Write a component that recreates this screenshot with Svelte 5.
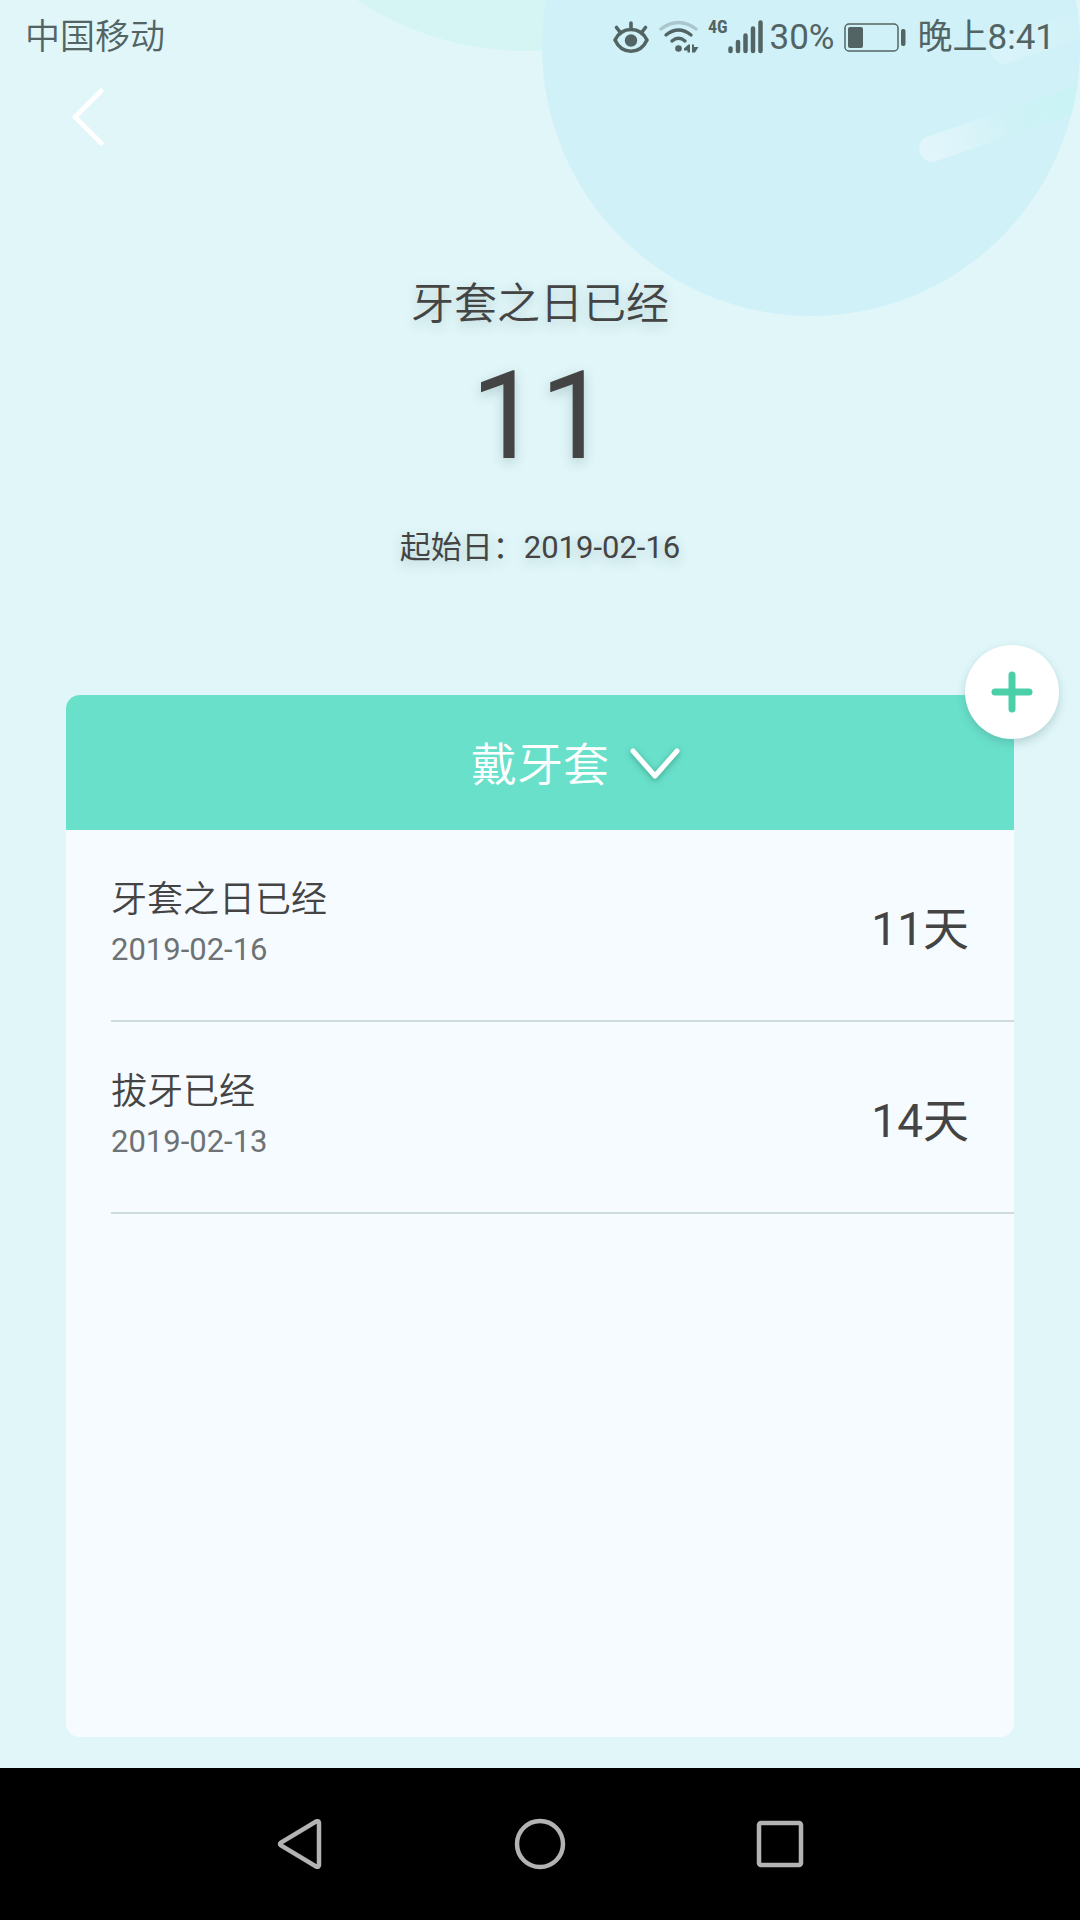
<script lang="ts">
	let category = '戴牙套';
	let open = false;

	const records = [
		{ name: '牙套之日已经', date: '2019-02-16', days: 11 },
		{ name: '拔牙已经', date: '2019-02-13', days: 14 }
	];

	const current = records[0];
</script>

<div class="screen">
	<svg class="backdrop" width="540" height="330" viewBox="0 0 540 330" aria-hidden="true">
		<defs>
			<clipPath id="disc"><circle cx="271" cy="47" r="269" /></clipPath>
			<linearGradient id="streak" x1="0" x2="1" y1="0" y2="0">
				<stop offset="0" stop-color="#e2f6fb" />
				<stop offset="0.2" stop-color="#dcf4fa" />
				<stop offset="0.45" stop-color="#cff2f6" />
				<stop offset="0.75" stop-color="#c9f3f4" />
				<stop offset="1" stop-color="#c9f3f4" />
			</linearGradient>
		</defs>
		<circle cx="-13" cy="-258" r="309" fill="#d5f4f4" />
		<circle cx="271" cy="47" r="269" fill="#cff1f8" opacity="0.9" />
		<g clip-path="url(#disc)">
			<rect x="0" y="-13" width="210" height="26" rx="13" fill="url(#streak)" transform="translate(380 153) rotate(-19)" />
			<rect x="0" y="-13" width="210" height="26" rx="13" fill="url(#streak)" opacity="0.5" transform="translate(452 55) rotate(-19)" />
		</g>
	</svg>

	<header class="status">
		<span class="carrier">中国移动</span>
		<svg class="eye" width="36" height="34" viewBox="0 0 36 34" fill="none" stroke="currentColor" stroke-width="3.6" stroke-linecap="round">
			<path d="M2 20C9 6 27 6 34 20C27 35 9 35 2 20Z" stroke-linejoin="round" />
			<path d="M18 9V3M7 12L3.500 7.500M29 12L32.500 7.500" />
			<circle cx="18" cy="20.500" r="6.200" fill="currentColor" stroke="none" />
		</svg>
		<svg class="wifi" width="40" height="34" viewBox="0 0 40 34" fill="none" stroke="currentColor" stroke-width="3.400" stroke-linecap="round">
			<path d="M2 9Q19.500 -4 37 9" opacity="0.3" />
			<path d="M7 15Q19.500 5 32 15" />
			<path d="M13 21Q19.500 15.500 26 21" />
			<circle cx="19.500" cy="28.500" r="3.300" fill="currentColor" stroke="none" />
			<path d="M31 24.500V32.500H28.500V30.500H25V28.500L29.500 24.500ZM33 24.500H35V27H39.500L36 32.500H33Z" fill="currentColor" stroke="none" />
		</svg>
		<span class="network">4G</span>
		<svg class="signal" width="36" height="34" viewBox="0 0 36 34" stroke="currentColor" stroke-width="4.500" stroke-linecap="round">
			<path d="M2.500 28.500V31M10 22V31M17.500 15.500V31M25 8.500V31M32.500 2.500V31" />
		</svg>
		<span class="percent">30%</span>
		<svg class="battery" width="62" height="30" viewBox="0 0 62 30">
			<rect x="1" y="1" width="53" height="27" rx="4" fill="none" stroke="currentColor" stroke-width="1.500" />
			<rect x="4" y="4" width="15" height="21" rx="2" fill="currentColor" />
			<rect x="57" y="6" width="4.500" height="17" rx="2" fill="currentColor" />
		</svg>
		<time>晚上8:41</time>
	</header>

	<nav class="toolbar">
		<button class="back" type="button" aria-label="返回">
			<svg width="34" height="60" viewBox="0 0 34 60" fill="none" stroke="#fff" stroke-width="5" stroke-linecap="round" stroke-linejoin="round">
				<path d="M30 3L4 29L30 55" />
			</svg>
		</button>
	</nav>

	<section class="summary">
		<h1>{current.name}</h1>
		<p class="count">{current.days}</p>
		<p class="start">起始日：{current.date}</p>
	</section>

	<main class="card">
		<button class="category" type="button" aria-expanded={open} on:click={() => (open = !open)}>
			<span class="label">{category}</span>
			<svg class="chevron" width="52" height="36" viewBox="0 0 52 36" fill="none" stroke="#fff" stroke-width="5" stroke-linecap="round" stroke-linejoin="round">
				<path d="M4 4L26 29L48 4" />
			</svg>
		</button>
		<button class="add" type="button" aria-label="添加">
			<svg width="42" height="42" viewBox="0 0 42 42" stroke="#4acfa8" stroke-width="7" stroke-linecap="round">
				<path d="M21 4V38M4 21H38" />
			</svg>
		</button>
		<ul>
			{#each records as record}
				<li>
					<div>
						<h2>{record.name}</h2>
						<time>{record.date}</time>
					</div>
					<span class="days">{record.days}天</span>
				</li>
			{/each}
		</ul>
	</main>

	<footer>
		<button type="button" aria-label="后退">
			<svg width="52" height="52" viewBox="0 0 52 52">
				<path d="M42 3.500Q45 2.500 45 5V47Q45 49.500 42 48.500L7 27.500Q5 26 7 24.500Z" />
			</svg>
		</button>
		<button type="button" aria-label="主屏幕">
			<svg width="52" height="52" viewBox="0 0 52 52"><circle cx="26" cy="26" r="23" /></svg>
		</button>
		<button type="button" aria-label="最近任务">
			<svg width="52" height="52" viewBox="0 0 52 52"><rect x="5" y="5" width="42" height="42" rx="2" /></svg>
		</button>
	</footer>
</div>

<style>
	:global(body) {
		margin: 0;
		background: #e0f6f9;
	}
	.screen {
		position: relative;
		display: flex;
		flex-direction: column;
		min-height: 100vh;
		overflow: hidden;
		background: #e0f6f9;
		color: #444;
		font-family: Roboto, 'Noto Sans CJK SC', sans-serif;
	}
	.backdrop {
		position: absolute;
		top: 0;
		right: 0;
		overflow: visible;
	}
	h1,
	h2,
	p,
	ul {
		margin: 0;
		padding: 0;
		font-weight: 400;
	}
	button {
		display: flex;
		align-items: center;
		justify-content: center;
		margin: 0;
		padding: 0;
		border: 0;
		background: none;
		color: inherit;
		font: inherit;
		cursor: pointer;
	}
	.status {
		position: relative;
		display: flex;
		align-items: center;
		height: 76px;
		padding: 0 25px;
		color: #526463;
		font-size: 35px;
		line-height: 78px;
	}
	.carrier {
		margin-right: auto;
		font-weight: 350;
	}
	.eye,
	.wifi,
	.signal {
		margin-bottom: 2px;
	}
	.wifi {
		margin-left: 10px;
	}
	.network {
		align-self: flex-start;
		margin: 15px 0 0 9px;
		font-family: 'Roboto Condensed', Roboto, sans-serif;
		font-size: 18px;
		font-weight: 700;
		line-height: 24px;
	}
	.percent {
		margin-left: 6px;
	}
	.battery {
		margin: 0 12px 0 9px;
	}
	.toolbar {
		position: relative;
		display: flex;
		padding: 12px 71px;
	}
	.summary {
		position: relative;
		display: flex;
		flex-direction: column;
		align-items: center;
		padding: 116px 0 127px;
		text-shadow: 0 4px 12px rgba(60, 90, 90, 0.25);
	}
	h1 {
		font-size: 43px;
		font-weight: 350;
		line-height: 56px;
	}
	.count {
		margin-top: 12px;
		font-size: 123px;
		line-height: 144px;
	}
	.start {
		margin-top: 40px;
		font-size: 31px;
		line-height: 40px;
	}
	.card {
		position: relative;
		flex: 1;
		margin: 0 66px 31px;
		border-radius: 14px;
		background: #f6fbff;
	}
	.category {
		display: grid;
		grid-template-columns: 1fr auto 1fr;
		width: 100%;
		height: 135px;
		padding-top: 4px;
		border-radius: 14px 14px 0 0;
		background: #69e0ca;
		color: #fff;
		font-size: 46px;
		font-weight: 350;
		line-height: 60px;
	}
	.label {
		grid-column: 2;
	}
	.chevron {
		margin-left: 20px;
		filter: drop-shadow(0 2px 3px rgba(20, 110, 90, 0.5));
	}
	.add {
		position: absolute;
		top: -50px;
		right: -45px;
		width: 94px;
		height: 94px;
		border-radius: 50%;
		background: #fff;
		box-shadow: 0 4px 8px rgba(60, 110, 110, 0.25);
	}
	ul {
		padding-left: 45px;
		list-style: none;
	}
	li {
		display: flex;
		align-items: center;
		justify-content: space-between;
		height: 190px;
		padding-right: 45px;
		border-bottom: 2px solid #cddcde;
	}
	h2 {
		font-size: 36px;
		font-weight: 350;
		line-height: 50px;
	}
	li time {
		display: block;
		color: #6d7274;
		font-size: 31px;
		line-height: 50px;
	}
	.days {
		padding-top: 8px;
		font-size: 46px;
		line-height: 60px;
	}
	footer {
		display: flex;
		justify-content: space-between;
		height: 152px;
		padding: 0 calc(100% / 6);
		background: #000;
	}
	footer button {
		flex: 1;
	}
	footer svg {
		fill: none;
		stroke: #b3b3b3;
		stroke-width: 4.500;
	}
</style>
